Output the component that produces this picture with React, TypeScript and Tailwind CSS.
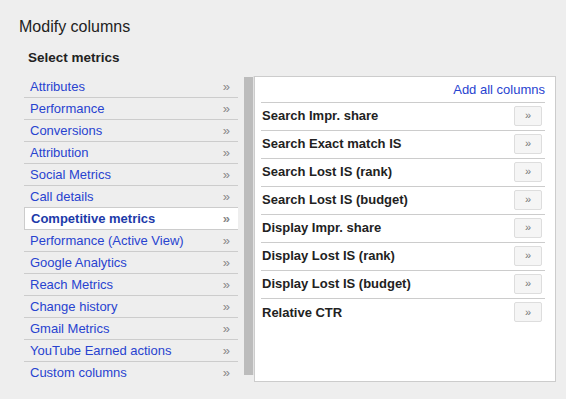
import React from "react";

const categories = [
  "Attributes",
  "Performance",
  "Conversions",
  "Attribution",
  "Social Metrics",
  "Call details",
  "Competitive metrics",
  "Performance (Active View)",
  "Google Analytics",
  "Reach Metrics",
  "Change history",
  "Gmail Metrics",
  "YouTube Earned actions",
  "Custom columns",
];

const metrics = [
  "Search Impr. share",
  "Search Exact match IS",
  "Search Lost IS (rank)",
  "Search Lost IS (budget)",
  "Display Impr. share",
  "Display Lost IS (rank)",
  "Display Lost IS (budget)",
  "Relative CTR",
];

const selected = "Competitive metrics";

export default function App() {
  return (
    <div className="w-[566px] h-[399px] bg-[#eeeeee] font-['Liberation_Sans',Arial,sans-serif] text-[#222] overflow-hidden">
      <div className="pl-[19px] pt-[17px] text-[16px] leading-[20px]">Modify columns</div>
      <div className="pl-[28px] pt-[13px] text-[13.5px] leading-[16px] font-bold">Select metrics</div>

      <div className="flex mt-[10px]">
        {/* category list */}
        <div className="ml-[24px] w-[214px] flex flex-col">
          {categories.map((c, i) => {
            const isSel = c === selected;
            const last = i === categories.length - 1;
            return (
              <div
                key={c}
                className={`h-[22px] flex items-center justify-between pr-[8px] text-[13px] ${
                  last ? "" : "border-b border-[#cccccc]"
                } ${
                  isSel
                    ? "bg-white border-l border-l-[#cccccc] -mt-px border-t border-t-[#cccccc] h-[23px] pl-[6px] font-bold text-[#1c3aa9]"
                    : "pl-[6px] text-[#2843d0]"
                }`}
              >
                <span>{c}</span>
                <span className="text-[#888] text-[13px]">»</span>
              </div>
            );
          })}
        </div>

        {/* scrollbar */}
        <div className="ml-[6px] mt-px w-[9px] h-[298px] bg-[#bcbcbc]" />
        <div className="w-px h-[299px] bg-[#e2e2e2]" />

        {/* metrics panel */}
        <div className="w-[302px] h-[306px] bg-white border border-[#cccccc] pl-[6px] pr-[10px]">
          <div className="h-[26px] flex items-center justify-end border-b border-[#cccccc] text-[13px] text-[#2843d0]">
            <span className="pt-[1px]">Add all columns</span>
          </div>
          {metrics.map((m, i) => (
            <div
              key={m}
              className={`h-[28px] flex items-center justify-between pl-px pr-[3px] ${
                i === metrics.length - 1 ? "" : "border-b border-[#cccccc]"
              }`}
            >
              <span className="text-[13px] font-bold -mt-px">{m}</span>
              <button className="w-[28px] h-[20px] -mt-[2px] bg-[#f5f5f5] border border-[#dddddd] rounded-[2px] text-[11px] text-[#777] leading-none">
                »
              </button>
            </div>
          ))}
        </div>
      </div>
    </div>
  );
}
